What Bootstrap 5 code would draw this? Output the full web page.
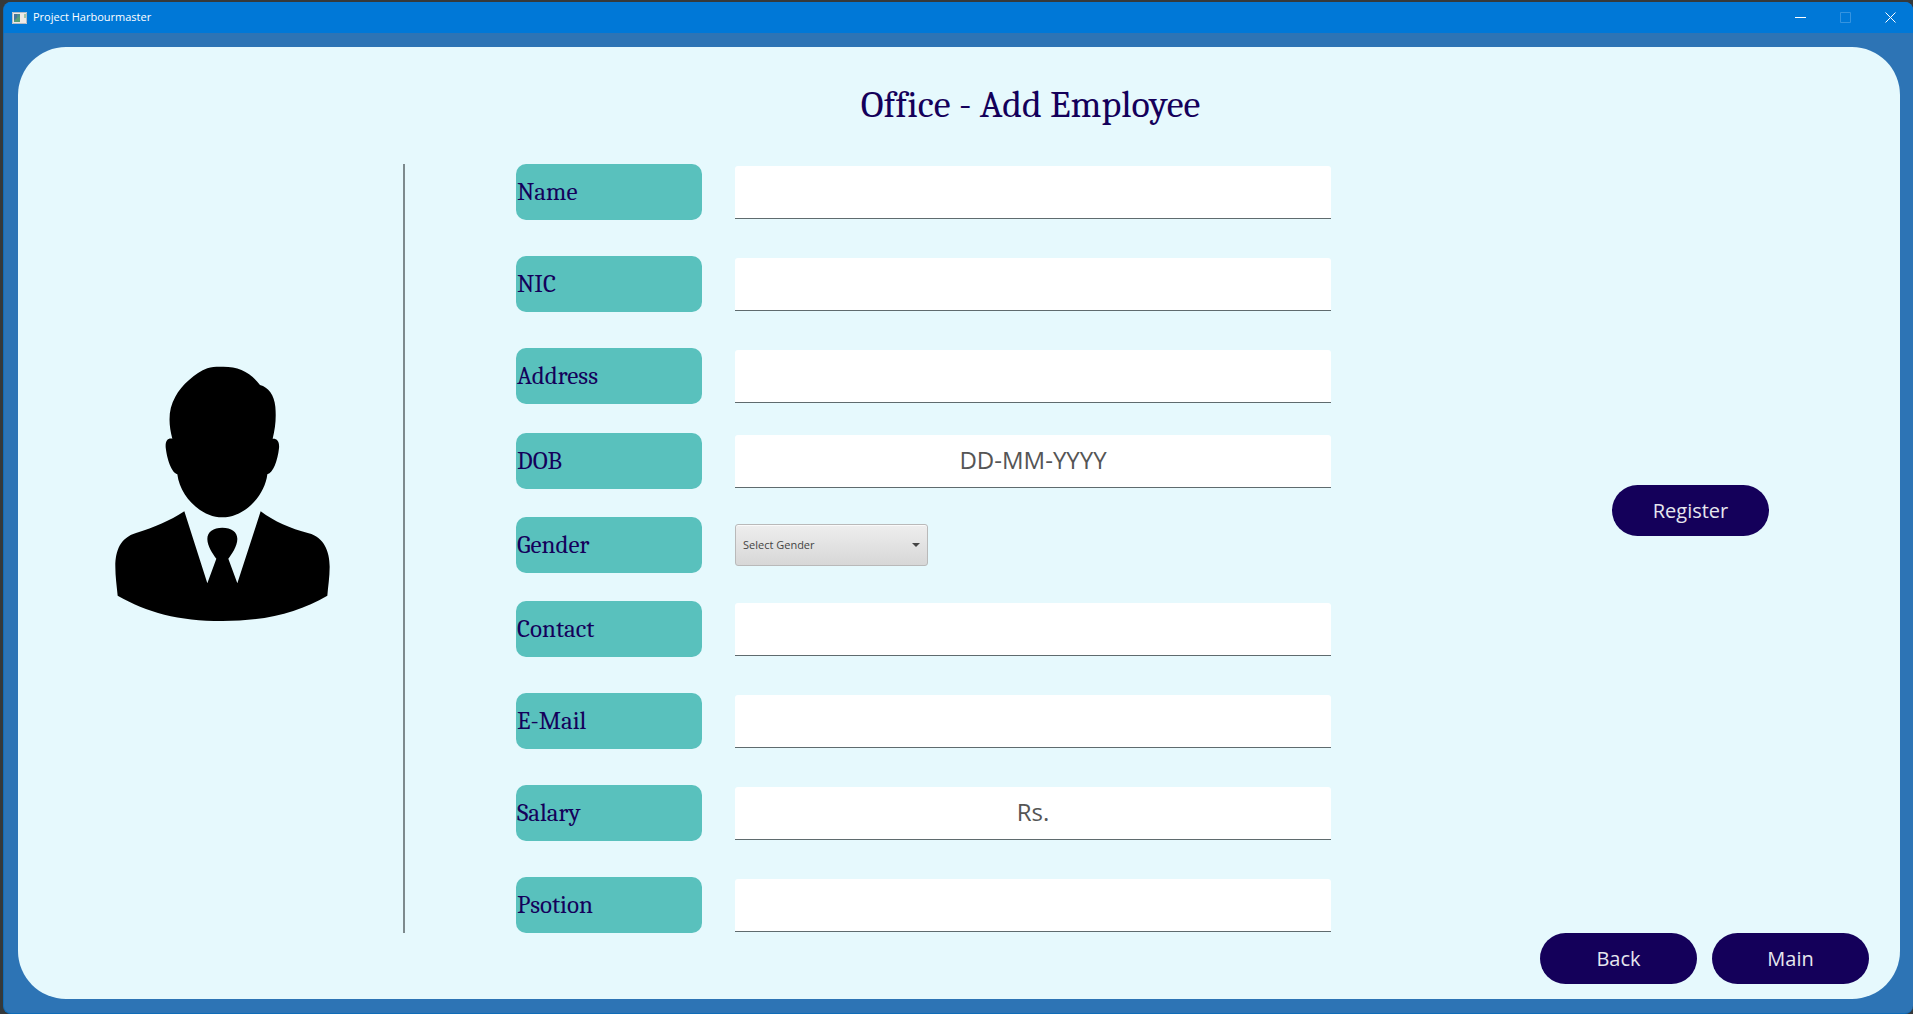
<!DOCTYPE html>
<html lang="en">
<head>
<meta charset="utf-8">
<meta name="viewport" content="width=device-width, initial-scale=1">
<title>Project Harbourmaster</title>
<link href="https://cdn.jsdelivr.net/npm/bootstrap@5.3.0/dist/css/bootstrap.min.css" rel="stylesheet">
<style>
  :root { --navy: #14005a; --ui: "Segoe UI", "Open Sans", "Noto Sans", sans-serif; --book: Cambria, Caladea, "Liberation Serif", serif; }
  body { background: #35393b; font-family: var(--ui); padding: 2px 0 0 3px; }
  .app-window { background: #2d74b5; border: 1px solid #0f6cb8; border-width: 0 0 1px 1px; border-radius: 8px; overflow: hidden; }
  .title-bar { background: #0078d7; height: 31px; color: #fff; font-size: 11px; padding-left: 8px; gap: 6px; }
  .win-btn { width: 45px; height: 30px; background: none; border: 0; padding: 0 0 2px; color: #fff; }
  .workspace { padding: 14px 13px 14px 14px; }
  .sheet { background: #e6f9fd; border-radius: 48px; padding: 36px 0 14px; }
  .sheet-grid { display: grid; grid-template-columns: 385px 2px 1fr 569px; }
  .page-title { grid-column: 3; margin: 0 0 37px 325px; font: 38px/44px var(--book); color: var(--navy); white-space: nowrap; }
  .portrait { padding-top: 202px; }
  .divider { background: #7d8a8d; }
  .employee-form { padding-left: 111px; }
  .field { display: flex; align-items: center; gap: 33px; margin-bottom: 36px; }
  .field.snug { margin-bottom: 29px; }
  .field.snugger { margin-bottom: 28px; }
  .field:last-child { margin-bottom: 0; }
  .field label { flex: none; width: 186px; height: 56px; border-radius: 10px; background: #59c1bd; color: var(--navy); font: 25px/56px var(--book); padding-left: 1px; }
  .field .form-control { flex: 1; min-width: 0; height: 53px; border: 0; border-bottom: 1px solid #5f6b6e; border-radius: 3px 3px 0 0; padding: 0 8px 2px; text-align: center; font-size: 24px; }
  .field .form-control::placeholder { color: #555; opacity: 1; }
  .field .form-select { width: 193px; height: 42px; border: 1px solid #b9b9b9; border-radius: 3px; padding: 0 32px 0 7px; font-size: 11px; color: #444;
    background: url("data:image/svg+xml,%3Csvg xmlns='http://www.w3.org/2000/svg' viewBox='0 0 8 4'%3E%3Cpath d='M0 0h8L4 4z' fill='%23444'/%3E%3C/svg%3E") right 7px center / 8px 4px no-repeat, linear-gradient(#eee, #d7d7d7);
    box-shadow: inset 0 1px #fafafa; }
  .btn-pill { width: 157px; height: 51px; border-radius: 26px; background: var(--navy); color: #e6e6ee; font-size: 20px; padding: 0; }
  .btn-pill:hover { background: #25107a; color: #fff; }
  .side { padding: 321px 131px 0 0; }
  .sheet-footer { gap: 15px; padding-right: 31px; }
</style>
</head>
<body class="d-flex flex-column min-vh-100">
<div class="app-window d-flex flex-column flex-grow-1">
  <header class="title-bar d-flex align-items-center">
    <svg width="15" height="12" viewBox="0 0 15 12" aria-hidden="true"><rect width="15" height="12" fill="#eee9e6"/><path d="M.5 11.5V.5h14v11z" fill="none" stroke="#b6bcc4"/><rect x="2" y="2" width="6" height="8" fill="#4d8f8e"/><path d="M2 2h3v4l-3 3z" fill="#47769c"/><path d="M5 6l3-2v6H2V9z" fill="#58a077"/><rect x="12" y="2" width="2" height="4" fill="#a5c8a9"/></svg>
    <span class="me-auto">Project Harbourmaster</span>
    <div class="d-flex">
      <button class="win-btn" aria-label="Minimize"><svg width="11" height="11" viewBox="0 0 11 11"><path d="M0 5.5h11" stroke="#fff"/></svg></button>
      <button class="win-btn" aria-label="Maximize" disabled><svg width="11" height="11" viewBox="0 0 11 11"><path d="M.5.5h10v10H.5z" fill="none" stroke="#3594e0"/></svg></button>
      <button class="win-btn" aria-label="Close"><svg width="11" height="11" viewBox="0 0 11 11"><path d="M.5.5l10 10M10.5.5l-10 10" stroke="#fff"/></svg></button>
    </div>
  </header>
  <main class="workspace d-flex flex-column flex-grow-1">
    <div class="sheet flex-grow-1">
      <div class="sheet-grid">
        <h1 class="page-title text-center">Office - Add Employee</h1>
      </div>
      <div class="sheet-grid">
        <div class="portrait text-center ps-4">
          <svg width="215" height="255" viewBox="75 78 645 765" role="img" aria-label="Employee portrait">
            <path d="M247 296C235 252 234 208 256 170C275 136 315 99 352 85C368 79 385 80 400 80C447 80 482 97 510 135C535 141 553 166 556 200C559 235 556 265 548 296C562 295 569 305 567 325C563 360 550 399 532 403C525 465 466 532 397 532C330 532 270 467 262 403C244 398 231 357 227 322C226 303 232 294 247 296Z"/>
            <path d="M283 514L352 730L379 656C369 643 352 619 352 597C352 575 370 563 397 563C424 563 442 575 442 597C442 619 425 643 415 656L442 730L512 514C553 545 600 565 656 580C702 592 719 635 719 680C719 712 714 740 712 767C625 817 530 843 397 843C265 843 170 817 83 767C80 735 76 710 76 680C76 630 92 593 138 579C195 562 238 543 283 514Z"/>
          </svg>
        </div>
        <div class="divider"></div>
        <form class="employee-form" id="employee">
          <div class="field"><label for="name">Name</label><input class="form-control" id="name" type="text"></div>
          <div class="field"><label for="nic">NIC</label><input class="form-control" id="nic" type="text"></div>
          <div class="field snug"><label for="address">Address</label><input class="form-control" id="address" type="text"></div>
          <div class="field snugger"><label for="dob">DOB</label><input class="form-control" id="dob" type="text" placeholder="DD-MM-YYYY"></div>
          <div class="field snugger"><label for="gender">Gender</label><select class="form-select" id="gender"><option>Select Gender</option></select></div>
          <div class="field"><label for="contact">Contact</label><input class="form-control" id="contact" type="text"></div>
          <div class="field"><label for="email">E-Mail</label><input class="form-control" id="email" type="text"></div>
          <div class="field"><label for="salary">Salary</label><input class="form-control" id="salary" type="text" placeholder="Rs."></div>
          <div class="field"><label for="position">Psotion</label><input class="form-control" id="position" type="text"></div>
        </form>
        <div class="side text-end"><button class="btn btn-pill" type="submit" form="employee">Register</button></div>
      </div>
      <div class="sheet-footer d-flex justify-content-end">
        <button class="btn btn-pill" type="button">Back</button>
        <button class="btn btn-pill" type="button">Main</button>
      </div>
    </div>
  </main>
</div>
<script src="https://cdn.jsdelivr.net/npm/bootstrap@5.3.0/dist/js/bootstrap.bundle.min.js"></script>
</body>
</html>
